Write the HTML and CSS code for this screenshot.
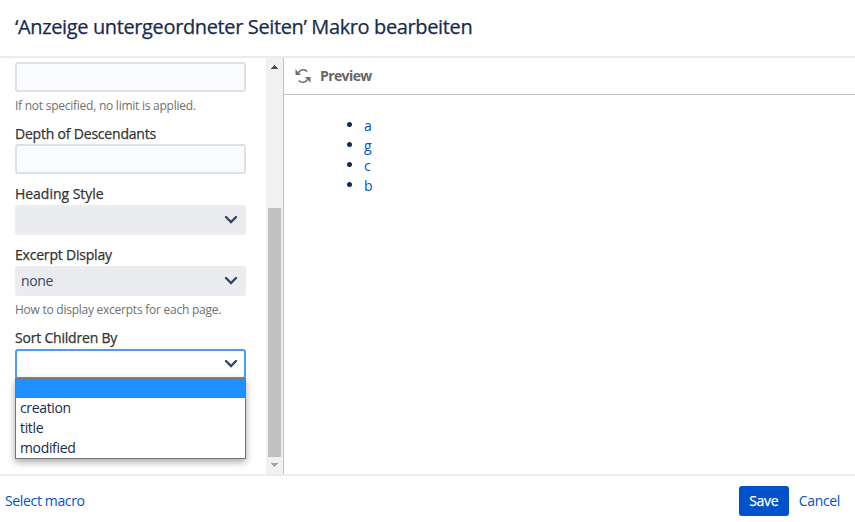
FILE: index.html
```
<!DOCTYPE html>
<html lang="de">
<head>
	<meta charset="utf-8">
	<title>Makro bearbeiten</title>
	<link rel="stylesheet" href="styles.css">
</head>
<body>
	<div class="dialog">
		<header class="dialog-header">
			<h2>‘Anzeige untergeordneter Seiten’ Makro bearbeiten</h2>
		</header>

		<div class="dialog-body">
			<form class="macro-form">
				<div class="field">
					<div class="text-input"></div>
					<div class="hint">If not specified, no limit is applied.</div>
				</div>
				<div class="field">
					<label>Depth of Descendants</label>
					<div class="text-input"></div>
				</div>
				<div class="field field-select">
					<label class="label-wide">Heading Style</label>
					<div class="select">
						<span></span>
						<svg class="chevron" width="14" height="10" viewBox="0 0 14 10"><path d="M2 2l5 5 5-5"/></svg>
					</div>
				</div>
				<div class="field field-select">
					<label>Excerpt Display</label>
					<div class="select">
						<span class="value">none</span>
						<svg class="chevron" width="14" height="10" viewBox="0 0 14 10"><path d="M2 2l5 5 5-5"/></svg>
					</div>
					<div class="hint">How to display excerpts for each page.</div>
				</div>
				<div class="field field-select">
					<label>Sort Children By</label>
					<div class="select select-open">
						<span></span>
						<svg class="chevron" width="14" height="10" viewBox="0 0 14 10"><path d="M2 2l5 5 5-5"/></svg>
						<ul class="options">
							<li class="selected"></li>
							<li>creation</li>
							<li>title</li>
							<li>modified</li>
						</ul>
					</div>
				</div>
			</form>

			<div class="scrollbar">
				<svg class="arrow-up" width="7" height="4" viewBox="0 0 7 4"><path d="M0 4V3h1V2h1V1h1V0h1v1h1v1h1v1h1v1z"/></svg>
				<div class="track"><div class="thumb"></div></div>
				<svg class="arrow-down" width="7" height="4" viewBox="0 0 7 4"><path d="M0 0v1h1v1h1v1h1v1h1V3h1V2h1V1h1V0z"/></svg>
			</div>

			<section class="preview">
				<div class="preview-header">
					<svg class="refresh" width="16" height="16" viewBox="0 0 16 16">
						<path class="stroke" d="M3.500 4.500C5.500 1.300 9.500.700 12.300 3.500M12.500 11.500C10.500 14.700 6.500 15.300 3.700 12.500"/>
						<path class="head" d="M.500 1v6h5.500L4.400 5.200 2.500 3.500zM15.500 15V9H10l1.600 1.800 1.900 1.700z"/>
					</svg>
					<span class="preview-title">Preview</span>
				</div>
				<ul class="pages">
					<li><a>a</a></li>
					<li><a>g</a></li>
					<li><a>c</a></li>
					<li><a>b</a></li>
				</ul>
			</section>
		</div>

		<footer class="dialog-footer">
			<a class="select-macro">Select macro</a>
			<div class="actions">
				<button class="save" type="button">Save</button>
				<a class="cancel">Cancel</a>
			</div>
		</footer>
	</div>
</body>
</html>
```
FILE: styles.css
```
* {
	box-sizing: border-box;
}

body {
	margin: 0;
	background: #fff;
	color: #172b4d;
	font: 14px/20px "Open Sans", "Noto Sans", sans-serif;
	letter-spacing: -.35px;
}

a {
	color: #0052cc;
}

ul {
	list-style: none;
	margin: 0;
	padding: 0;
}

.dialog {
	display: flex;
	flex-direction: column;
	width: 855px;
	height: 522px;
	overflow: hidden;
}

.dialog-header {
	height: 58px;
	padding: 13px 15px;
	border-bottom: 2px solid #ebecf0;
}

h2 {
	margin: 0;
	font-size: 20px;
	font-weight: 500;
	line-height: 28px;
	letter-spacing: -.37px;
	white-space: nowrap;
	-webkit-text-stroke: .25px #172b4d;
}

.dialog-body {
	display: flex;
	height: 416px;
}

/* left column */
.macro-form {
	width: 266px;
	padding: 4px 20px 0 15px;
}

.field {
	margin-bottom: 8px;
}

.field:nth-child(2),
.field:nth-child(3) {
	margin-bottom: 10px;
}

label {
	display: block;
	height: 20px;
	color: #333;
	font-weight: 500;
	letter-spacing: -.2px;
	white-space: nowrap;
	-webkit-text-stroke: .25px #333;
}

.label-wide {
	letter-spacing: -.03px;
}

.field-select label {
	height: 21px;
}

.text-input {
	height: 30px;
	border: 2px solid #dfe1e6;
	border-radius: 3px;
	background: #fafbfc;
}

.hint {
	margin-top: 4px;
	color: #707070;
	font-size: 12px;
	letter-spacing: -.25px;
	white-space: nowrap;
}

.select {
	display: flex;
	align-items: center;
	justify-content: space-between;
	position: relative;
	height: 30px;
	padding: 0 8px 0 6px;
	border-radius: 3px;
	background: #ebecf0;
}

.value {
	color: #344563;
}

.chevron {
	fill: none;
	stroke: #344563;
	stroke-width: 2.4;
	stroke-linecap: round;
}

.select-open {
	padding: 0 6px 0 4px;
	border: 2px solid #4c9aff;
	background: #fff;
}

.options {
	position: absolute;
	top: 27px;
	left: -2px;
	width: 231px;
	border: 1px solid #767676;
	background: #fff;
	box-shadow: 0 3px 7px rgba(0, 0, 0, .35);
}

.options li {
	height: 20px;
	padding-left: 4px;
}

.options .selected {
	height: 19px;
	background: #1e90ff;
}

.scrollbar {
	display: flex;
	flex-direction: column;
	align-items: center;
	width: 17px;
	padding: 7px 0;
	background: #f1f1f1;
}

.track {
	flex: 1;
	width: 13px;
	padding-top: 139px;
}

.thumb {
	height: 249px;
	background: #c1c1c1;
}

.arrow-up {
	fill: #505050;
}

.arrow-down {
	fill: #a3a3a3;
}

/* right column */
.preview {
	flex: 1;
	border-left: 1px solid #c1c1c1;
}

.preview-header {
	display: flex;
	align-items: center;
	gap: 9px;
	height: 37px;
	padding-left: 11px;
	border-bottom: 1px solid #c1c1c1;
	color: #666;
	font-weight: 700;
}

.preview-title {
	letter-spacing: -.6px;
}

.refresh .stroke {
	fill: none;
	stroke: #707070;
	stroke-width: 1.6;
}

.refresh .head {
	fill: #707070;
}

.pages {
	padding: 21px 0 0 63px;
}

.pages li {
	display: flex;
	height: 20px;
}

.pages li::before {
	content: "";
	width: 5px;
	height: 5px;
	margin: 6px 12px 0 0;
	border-radius: 50%;
	background: #172b4d;
}

.dialog-footer {
	display: flex;
	justify-content: space-between;
	height: 48px;
	padding: 10px 15px 0 5px;
	border-top: 2px solid #ebecf0;
	line-height: 30px;
}

.actions {
	display: flex;
	gap: 10px;
}

.save {
	width: 50px;
	height: 30px;
	padding: 0;
	border: 0;
	border-radius: 3px;
	background: #0052cc;
	color: #fff;
	font: inherit;
	font-weight: 500;
	letter-spacing: -.25px;
	-webkit-text-stroke: .25px #fff;
}
```
